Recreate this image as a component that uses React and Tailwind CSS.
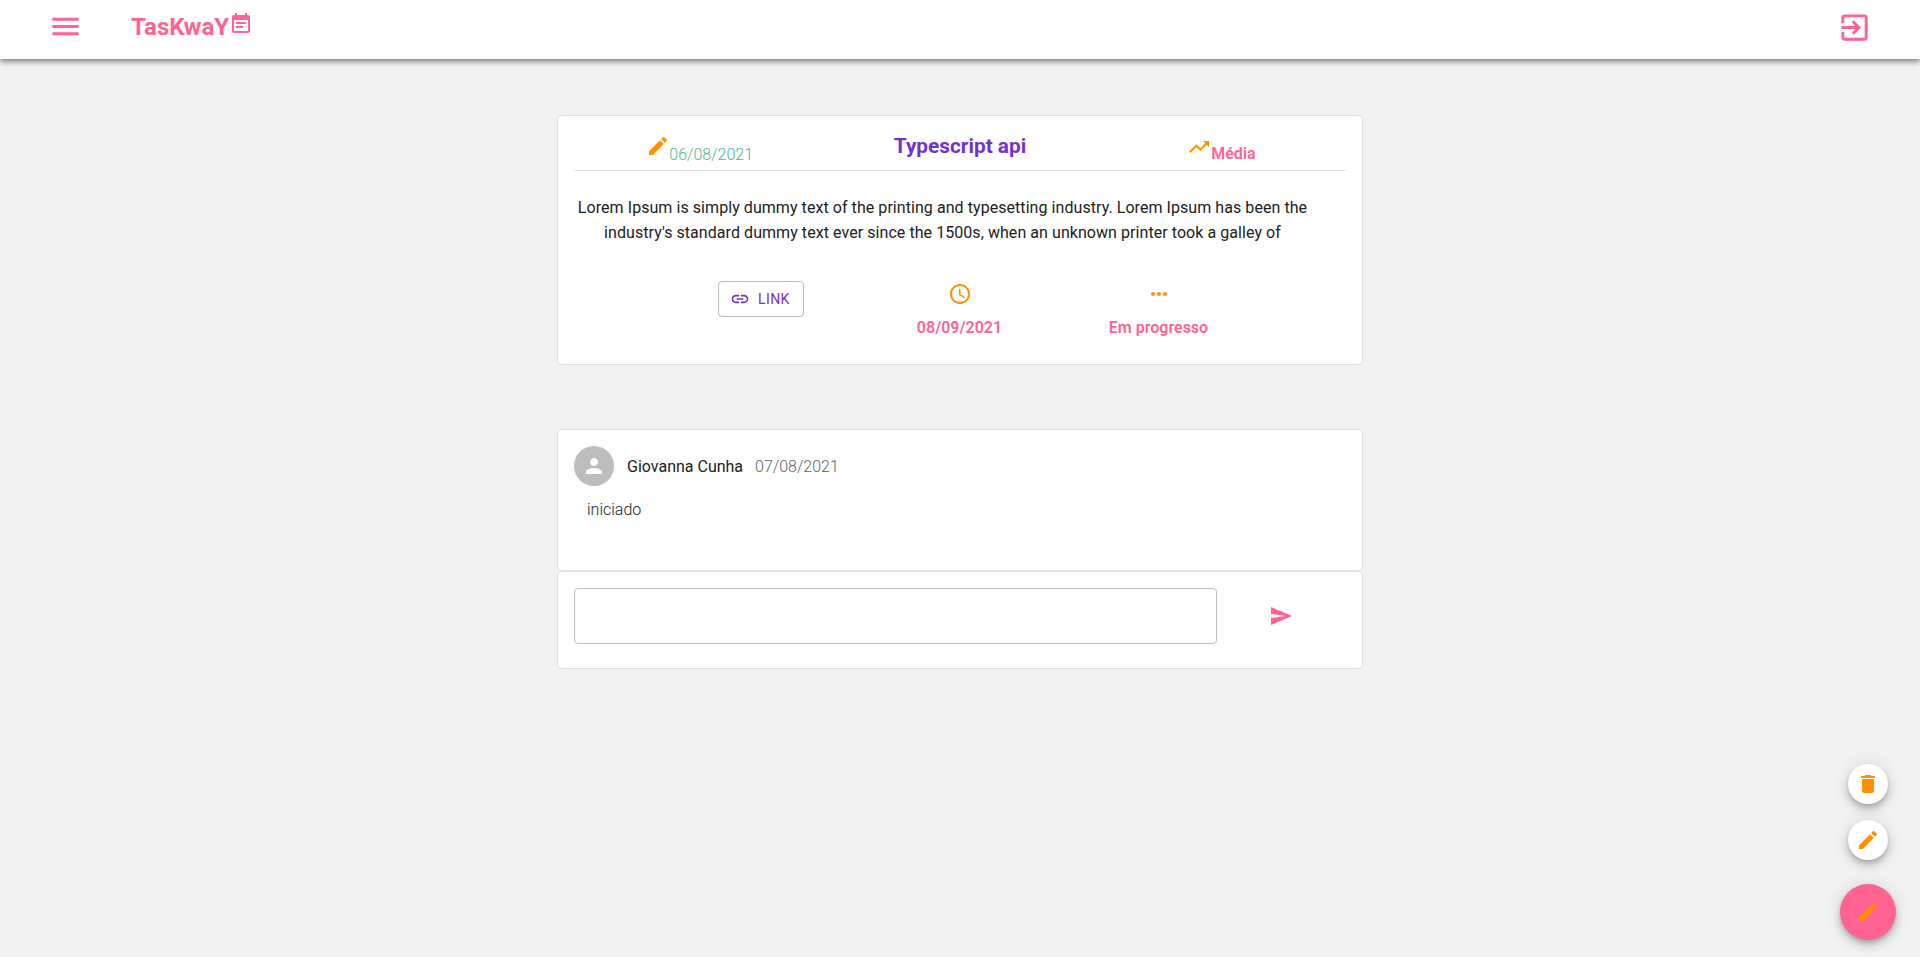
const PATHS = {
  menu: "M3 18h18v-2H3v2zm0-5h18v-2H3v2zm0-7v2h18V6H3z",
  event: "M17 10H7v2h10v-2zm2-7h-1V1h-2v2H8V1H6v2H5c-1.11 0-1.99.9-1.99 2L3 19c0 1.1.89 2 2 2h14c1.1 0 2-.9 2-2V5c0-1.1-.9-2-2-2zm0 16H5V8h14v11zm-5-5H7v2h7v-2z",
  exit: "M10.09 15.59L11.5 17l5-5-5-5-1.41 1.41L12.67 11H3v2h9.67l-2.58 2.59zM19 3H5c-1.11 0-2 .9-2 2v4h2V5h14v14H5v-4H3v4c0 1.1.89 2 2 2h14c1.1 0 2-.9 2-2V5c0-1.1-.9-2-2-2z",
  edit: "M3 17.25V21h3.75L17.81 9.94l-3.75-3.75L3 17.25zM20.71 7.04c.39-.39.39-1.02 0-1.41l-2.34-2.34a.9959.9959 0 0 0-1.41 0l-1.83 1.83 3.75 3.75 1.83-1.83z",
  trending: "M16 6l2.29 2.29-4.88 4.88-4-4L2 16.59 3.41 18l6-6 4 4 6.3-6.29L22 12V6z",
  link: "M3.9 12c0-1.71 1.39-3.1 3.1-3.1h4V7H7c-2.76 0-5 2.24-5 5s2.24 5 5 5h4v-1.9H7c-1.71 0-3.1-1.39-3.1-3.1zM8 13h8v-2H8v2zm9-6h-4v1.9h4c1.71 0 3.1 1.39 3.1 3.1s-1.39 3.1-3.1 3.1h-4V17h4c2.76 0 5-2.24 5-5s-2.24-5-5-5z",
  clock: "M11.99 2C6.47 2 2 6.48 2 12s4.47 10 9.99 10C17.52 22 22 17.52 22 12S17.52 2 11.99 2zM12 20c-4.42 0-8-3.58-8-8s3.58-8 8-8 8 3.58 8 8-3.58 8-8 8zm.5-13H11v6l5.25 3.15.75-1.23-4.5-2.67z",
  more: "M6 10c-1.1 0-2 .9-2 2s.9 2 2 2 2-.9 2-2-.9-2-2-2zm12 0c-1.1 0-2 .9-2 2s.9 2 2 2 2-.9 2-2-.9-2-2-2zm-6 0c-1.1 0-2 .9-2 2s.9 2 2 2 2-.9 2-2-.9-2-2-2z",
  person: "M12 12c2.21 0 4-1.79 4-4s-1.79-4-4-4-4 1.79-4 4 1.79 4 4 4zm0 2c-2.67 0-8 1.34-8 4v2h16v-2c0-2.66-5.33-4-8-4z",
  send: "M2.01 21L23 12 2.01 3 2 10l15 2-15 2z",
  trash: "M6 19c0 1.1.9 2 2 2h8c1.1 0 2-.9 2-2V7H6v12zM19 4h-3.5l-1-1h-5l-1 1H5v2h14V4z",
};

function Icon({ name, className }) {
  return (
    <svg viewBox="0 0 24 24" fill="currentColor" className={className}>
      <path d={PATHS[name]} />
    </svg>
  );
}

function Header() {
  return (
    <header className="h-[59px] bg-white flex items-start justify-between pt-[9px] pl-[48px] pr-[48px] shadow-[0_2px_4px_-1px_rgba(0,0,0,0.3),0_4px_5px_0_rgba(0,0,0,0.2),0_1px_10px_0_rgba(0,0,0,0.12)] relative">
      <div className="flex items-start">
        <Icon name="menu" className="w-[35px] h-[35px] text-[#ff6392]" />
        <div className="flex items-start ml-[48px] h-[40px]">
          <span className="text-[24px] leading-[36px] font-bold text-[#ff6392]">TasKwaY</span>
          <Icon name="event" className="w-[24px] h-[24px] mt-[3px] text-[#ff6392]" />
        </div>
      </div>
      <Icon name="exit" className="w-[35px] h-[35px] mt-[1px] text-[#ff6392]" />
    </header>
  );
}

function TaskCard() {
  return (
    <section className="w-[806px] h-[250px] bg-white rounded border border-[#e0e0e0] px-[16px]">
      <div className="grid grid-cols-3 h-[55px] border-b border-[#e0e0e0]">
        <div className="flex justify-center items-start pt-[18px] pr-[6px]">
          <Icon name="edit" className="w-[24px] h-[24px] text-[#ff9100] -mr-[1px]" />
          <span className="mt-[9px] text-[16px] leading-[24px] font-light text-[#4fb58c]">06/08/2021</span>
        </div>
        <div className="text-center pt-[14px] text-[20.8px] leading-[32px] font-bold text-[#7232d0]">Typescript api</div>
        <div className="flex justify-center items-start pt-[19px] pl-[8px]">
          <Icon name="trending" className="w-[24px] h-[24px] text-[#ff9100]" />
          <span className="mt-[7px] text-[16px] leading-[24px] font-semibold text-[#ff6392]">Média</span>
        </div>
      </div>
      <p className="w-[737px] mt-[24px] text-center text-[16px] leading-[25px] tracking-[0.06px] text-[#212121]">
        Lorem Ipsum is simply dummy text of the printing and typesetting industry. Lorem Ipsum has been the industry's standard dummy text ever since the 1500s, when an unknown printer took a galley of
      </p>
      <div className="flex mt-[24px]">
        <button className="ml-[144px] mt-[12px] w-[86px] h-[36px] pl-[11px] flex items-center gap-[8px] rounded border border-[#bdbdbd] text-[14px] font-normal tracking-[0.4px] text-[#7232d0]">
          <Icon name="link" className="w-[20px] h-[20px]" />
          LINK
        </button>
        <div className="ml-[84px] w-[143px] flex flex-col items-center pt-[13px]">
          <Icon name="clock" className="w-[24px] h-[24px] text-[#ff9100]" />
          <span className="mt-[10px] text-[16px] leading-[24px] font-semibold text-[#ff6392]">08/09/2021</span>
        </div>
        <div className="ml-[56px] w-[143px] flex flex-col items-center pt-[13px]">
          <Icon name="more" className="w-[24px] h-[24px] text-[#ff9100]" />
          <span className="mt-[10px] text-[16px] leading-[24px] font-semibold text-[#ff6392]">Em progresso</span>
        </div>
      </div>
    </section>
  );
}

function CommentCard() {
  return (
    <section className="w-[806px] h-[142px] bg-white rounded border border-[#e0e0e0] px-[16px] pt-[16px]">
      <div className="flex items-center">
        <div className="w-[40px] h-[40px] rounded-full bg-[#bdbdbd] flex items-center justify-center">
          <Icon name="person" className="w-[24px] h-[24px] text-white" />
        </div>
        <span className="ml-[13px] mt-[2px] text-[16px] font-normal text-[#212121]">Giovanna Cunha</span>
        <span className="ml-[12px] mt-[2px] text-[16px] font-light text-[#5f5f5f]">07/08/2021</span>
      </div>
      <p className="ml-[13px] mt-[12px] text-[16px] leading-[24px] font-light text-[#212121]">iniciado</p>
    </section>
  );
}

function ReplyCard() {
  return (
    <section className="w-[806px] h-[98px] bg-white rounded border border-[#e0e0e0] px-[16px] pt-[16px] flex items-start">
      <input className="w-[643px] h-[56px] rounded border border-[#bdbdbd] bg-white outline-none" />
      <Icon name="send" className="ml-[52px] mt-[16px] w-[24px] h-[24px] text-[#ff6392]" />
    </section>
  );
}

function Fab({ name, big }) {
  return big ? (
    <button className="w-[56px] h-[56px] rounded-full bg-[#ff6392] flex items-center justify-center shadow-[0_3px_5px_-1px_rgba(0,0,0,0.2),0_6px_10px_0_rgba(0,0,0,0.14),0_1px_18px_0_rgba(0,0,0,0.12)]">
      <Icon name={name} className="w-[24px] h-[24px] text-[#ff9100]" />
    </button>
  ) : (
    <button className="w-[40px] h-[40px] rounded-full bg-white flex items-center justify-center shadow-[0_3px_5px_-1px_rgba(0,0,0,0.2),0_6px_10px_0_rgba(0,0,0,0.14),0_1px_18px_0_rgba(0,0,0,0.12)]">
      <Icon name={name} className="w-[24px] h-[24px] text-[#ff9100]" />
    </button>
  );
}

export default function App() {
  return (
    <div className="relative h-[957px] overflow-hidden bg-[#f2f2f2] font-['Roboto',sans-serif]">
      <Header />
      <main className="flex flex-col items-center pt-[56px]">
        <TaskCard />
        <div className="mt-[64px]">
          <CommentCard />
          <ReplyCard />
        </div>
      </main>
      <div className="absolute right-[24px] bottom-[17px] flex flex-col items-center">
        <Fab name="trash" />
        <div className="mt-[16px]"><Fab name="edit" /></div>
        <div className="mt-[24px]"><Fab name="edit" big /></div>
      </div>
    </div>
  );
}
